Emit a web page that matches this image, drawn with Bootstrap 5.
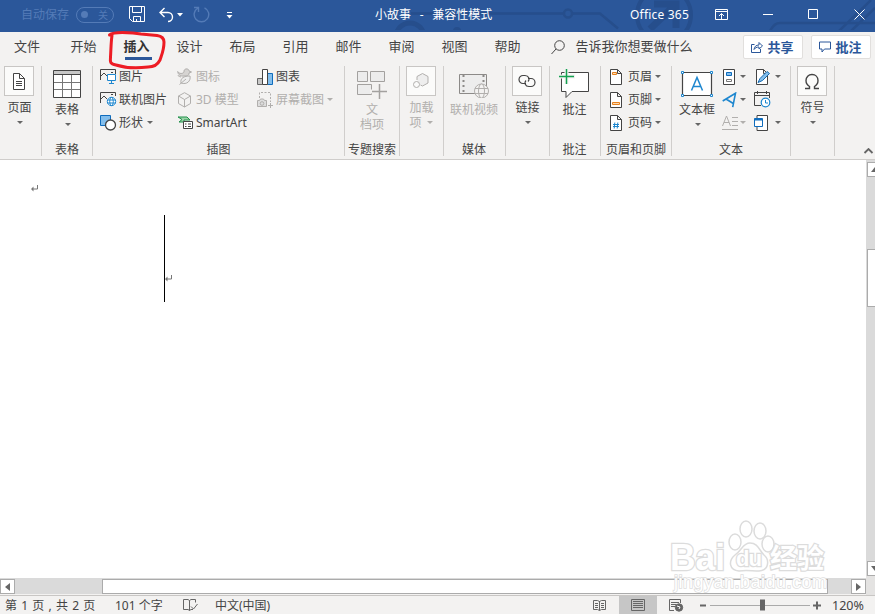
<!DOCTYPE html>
<html lang="zh-CN">
<head>
<meta charset="utf-8">
<meta name="viewport" content="width=device-width, initial-scale=1">
<title>小故事 - 兼容性模式</title>
<link href="https://cdn.jsdelivr.net/npm/bootstrap@5.3.0/dist/css/bootstrap.min.css" rel="stylesheet">
<style>
body{margin:0;overflow:hidden;font-family:"Noto Sans","Noto Sans CJK SC",sans-serif;font-size:12px;line-height:14px;color:#444}
svg{display:block;flex:none;fill:none;stroke:#444}
.app-window{width:875px;height:614px}
.title-strip{height:32px;background:#2b579a;color:#fff;padding-left:21px;display:grid;grid-template-columns:55px 53px 30px 18px 16px 33px 149px 255px 85px 47px 46px 46px 1fr;align-items:center;padding-bottom:3px}
.title-strip svg{stroke:#fff}
.title-strip>*{z-index:1;white-space:nowrap}
.title-strip .title-art{z-index:0;left:0;top:0;stroke:#264e8c}
.doc-name{word-spacing:1.2px}
.suite-name{letter-spacing:.2px}
.faded{color:#547bb7}
.title-strip svg.faded{stroke:#547bb7}
.auto-switch{width:38px;height:16px;border:1px solid #547bb7;border-radius:8px;font-size:10px;padding:0 5px 0 4px}
.auto-switch i{width:7px;height:7px;border-radius:50%;background:#547bb7}
.tab-strip{height:32px;background:#f3f2f1;padding:0 0 5px 14px;font-size:13px;display:grid;grid-template-columns:56.5px repeat(8,53px) 56px 25px 167px 68px 1fr;align-items:center;white-space:nowrap}
.tab-on{font-weight:600;color:#333}
.tab-on::after{content:"";position:absolute;left:1px;top:18px;width:27px;height:3px;background:#2b579a}
.act{width:60px;height:24px;background:#fff;border:1px solid #e1dfdd;border-radius:2px;color:#2b579a;font-weight:600;padding:0;margin-top:3px}
.act svg{stroke:#2b579a}
.red-ring{left:100px;top:25px;z-index:5}
.ribbon{height:96px;background:#f3f2f1;border-bottom:1px solid #cfcdcb;padding-top:2px}
.grp{height:90px;border-right:1px solid #d0cecc;flex:none}
.cap{height:12px;line-height:12px;white-space:nowrap}
.tall{padding-top:4px;line-height:14px;text-align:center;white-space:nowrap}
.slim{padding-right:2px}
.slim .lab,.slim .caret{position:relative;left:1px}
.boxed{width:30px;height:30px;background:#fbfbfa;border:1px solid #c8c6c4}
.lab{margin-top:5px}
.tall .caret,.slim .lab+.caret{margin-top:6px}
.tall .caret{margin-left:2px}
.caret{width:0;height:0;border:3px solid transparent;border-top:3.5px solid #666;border-bottom:0;flex:none}
.off{color:#b1afad}
.off .caret{border-top-color:#b1afad}
.off svg{stroke:#b1afad}
.line{height:21px;white-space:nowrap}
.ico{width:19px;flex:none}
.wa{width:77px}.wb{width:80px}
.work{height:435px}
.page-area{width:866px;background:#fff}
.vbar{width:9px;background:#dadada;overflow:hidden}
.knob{background:#fff;border:1px solid #ababab;flex:none}
.hbar{height:17px;background:#dadada;border-bottom:1px solid #f3f2f1;padding-top:1px}
.status{height:19px;background:#f3f2f1;border-top:1px solid #c8c6c4;display:grid;grid-template-columns:110px 68px 32px 378px 26px 54px 27px 132px 1fr;padding-left:5px;align-items:center;white-space:nowrap}
.status svg{stroke:#666}
.status>span{padding-top:2px}
.page-count{word-spacing:1.1px}
.zoom-value{font-size:12.5px}
.view-on{background:#c6c6c6;width:38px;height:18px}
.stamp{left:665px;top:512px;z-index:4}
</style>
</head>
<body>
<div class="app-window d-flex flex-column position-relative overflow-hidden">
  <header class="title-strip position-relative">
    <svg class="title-art position-absolute" width="875" height="30" stroke-width="2.5"><path d="M411 13.500H563M573 13.500H592h8l18 15"/><circle cx="568" cy="13.500" r="4"/><circle cx="410" cy="37" r="14" stroke-width="5"/><circle cx="457" cy="31" r="4" fill="#264e8c" stroke="none"/><circle cx="664" cy="15" r="27" stroke-width="4"/><path d="M650 29l27-26M654 4h22v24" stroke-width="7"/><path d="M770 31q4-8 10-8h95M838 32L871 0M850 32l25-24"/></svg>
    <span class="faded">自动保存</span>
    <span class="auto-switch faded d-flex align-items-center justify-content-between"><i></i>关</span>
    <svg width="17" height="17"><path d="M.5.5h15v15H3.500L.5 12.500zM3.500.5v6h9v-6M4.500 15.500v-5h7v5M7.500 13v2.500"/></svg>
    <svg width="16" height="16" stroke-width="1.400"><path d="M5.500 1L1 5.500l4.500 4.500M1.500 5.500H9a4.500 4.500 0 0 1 0 9"/></svg>
    <svg width="6" height="4"><path d="M0 0h6L3 3.500z" fill="#fff" stroke="none"/></svg>
    <svg class="faded" width="17" height="17" stroke-width="1.400"><path d="M1 1.500h4.500V6M5 2A7.300 7.300 0 1 0 11.500 1.800"/></svg>
    <svg width="8" height="8"><path d="M1 1.500h5"/><path d="M.5 4h6L3.500 7.500z" fill="#fff" stroke="none"/></svg>
    <span class="doc-name">小故事&nbsp; - &nbsp;兼容性模式</span>
    <span class="suite-name">Office 365</span>
    <svg width="13" height="11"><path d="M.5.5h12v10H.5zM.5 2.500h12M6.500 10V4.500M4 7l2.500-2.500L9 7"/></svg>
    <svg width="12" height="2"><path d="M1 .5h10"/></svg>
    <svg width="11" height="11"><path d="M.5.5h9v9h-9z"/></svg>
    <svg width="11" height="11"><path d="M.5.5l10 10M10.500.5l-10 10"/></svg>
  </header>

  <nav class="tab-strip">
    <span>文件</span><span>开始</span><span class="tab-on position-relative">插入</span><span>设计</span><span>布局</span><span>引用</span><span>邮件</span><span>审阅</span><span>视图</span><span>帮助</span>
    <svg class="mt-1" width="14" height="15"><circle cx="8.500" cy="5.500" r="4.800"/><path d="M5 9L.5 14"/></svg>
    <span>告诉我你想要做什么</span>
    <button class="act d-flex align-items-center justify-content-center gap-1"><svg width="12" height="12"><path d="M3.500 3.500h-3v8h9V8M3 8.500c.5-3 2-4.500 5-4.500V1.500L11.500 5 8 8V6C5.500 6 4 7 3 8.500z"/></svg><span>共享</span></button>
    <button class="act d-flex align-items-center justify-content-center gap-1"><svg width="12" height="12"><path d="M.5 1h11v7H5.500L3 11V8H.5z"/></svg><span>批注</span></button>
  </nav>
  <svg class="red-ring position-absolute" width="72" height="50"><path d="M9.500 10C13 7 21 7 33 8l8 1 16 1.500q7 1 7 6.500c0 8-2 12-4 18-2 4-5 7-12 7-12 1.500-24 .5-32-2-6-1-6-3-5.500-8C11 24 11 17 12 10.500" stroke="#ed1c24" stroke-width="3" stroke-linecap="round" stroke-linejoin="round"/></svg>

  <section class="ribbon d-flex">
    <div class="grp slim d-flex flex-column align-items-center" style="width:42px;padding-right:4px">
      <div class="boxed d-flex align-items-center justify-content-center"><svg width="14" height="17"><path d="M1.500.5h6l5 5v11h-11zM7.500.5v5h5M4 8.500h6M4 10.500h6M4 12.500h6" fill="#fff"/></svg></div>
      <div class="lab">页面</div><i class="caret"></i>
    </div>
    <div class="grp d-flex flex-column align-items-center justify-content-between" style="width:51px">
      <div class="tall d-flex flex-column align-items-center"><svg width="28" height="28"><path d="M.5.5h27v27H.5z" fill="#fff"/><path d="M1 1h26v3H1z" fill="#c8c8c8" stroke="none"/><path d="M.5 4.500h27"/><path d="M1 12.500h26M1 19.500h26M9.500 5v22M18.500 5v22" stroke="#777"/></svg><div class="lab">表格</div><i class="caret"></i></div>
      <div class="cap">表格</div>
    </div>
    <div class="grp d-flex flex-column justify-content-between" style="width:252px">
      <div class="d-flex" style="padding-left:7px">
        <div class="wa d-flex flex-column" style="row-gap:2px">
          <div class="line d-flex align-items-center"><span class="ico"><svg width="17" height="15"><path d="M.5 11V.5h15V5M0 8l4-4 4 4M11 3.500h2"/><path d="M7.500 5.500h8v6h-8zM11.500 12v2M9 14.500h5" fill="#fff" stroke="#1e87cf"/></svg></span>图片</div>
          <div class="line d-flex align-items-center"><span class="ico"><svg width="17" height="15"><path d="M.5 11V.5h15V4M0 8l4-4 3 3M11 2.500h2"/><g stroke="#1e87cf"><circle cx="11.500" cy="9.500" r="4.200" fill="#fff"/><ellipse cx="11.500" cy="9.500" rx="1.800" ry="4"/><path d="M7.500 8h8M7.500 11h8"/></g></svg></span>联机图片</div>
          <div class="line d-flex align-items-center"><span class="ico"><svg width="17" height="16"><path d="M.5.5h10v10H.5z" fill="#83beec" stroke="#0f6cbd"/><circle cx="10.500" cy="10" r="5" fill="#fff" stroke-width="1.300"/></svg></span>形状<i class="caret ms-1"></i></div>
        </div>
        <div class="wb d-flex flex-column" style="row-gap:2px">
          <div class="line d-flex align-items-center off"><span class="ico"><svg width="16" height="17"><path d="M.7 3.500C2 6 6 6 7 4c-.5-4 5-4 5-1l2.500 1L12 5c0 3-2 3-5 3-3 .5-6-1-6.300-4.500zM4 9C2 8.500 1 8 1 7" fill="#d6d4d2"/><path d="M4 15c-1-5 3-7 9-7 1 5-3 9-9 7zM2.500 16.500L9 11" fill="#eee"/></svg></span>图标</div>
          <div class="line d-flex align-items-center off"><span class="ico"><svg width="15" height="16"><path d="M7.500.7l6 3.300v7.500l-6 3.500-6-3.500V4zM1.500 4l6 3.500 6-3.500M7.500 7.500V15"/></svg></span>3D 模型</div>
          <div class="line d-flex align-items-center"><span class="ico"><svg width="17" height="14"><path d="M1 1h9l3 3H7v2H2l3-2.500z" fill="#9bd3a8" stroke="#21914a"/><path d="M6.500 5.500h9v7h-9z" fill="#fff"/><path d="M8 8h1.500M11 8h3M8 10.500h1.500M11 10.500h3"/></svg></span>SmartArt</div>
        </div>
        <div class="d-flex flex-column" style="row-gap:2px">
          <div class="line d-flex align-items-center"><span class="ico"><svg width="17" height="16"><path d="M.5 9.500h5v6h-5z" fill="#c8c8c8" stroke="#666"/><path d="M10.500 4.500h5v11h-5z" fill="#83beec" stroke="#0f6cbd"/><path d="M5.500.5h5v15h-5z" fill="#fff"/></svg></span>图表</div>
          <div class="line d-flex align-items-center off"><span class="ico"><svg width="17" height="17"><path d="M2.500 7V1.500h11V11" stroke-dasharray="2 1.500"/><path d="M.5 9.500h2l1-1.500h3l1 1.500h2v6h-9zM13.500 12v5M11 14.500h5" fill="#ddd"/><circle cx="5" cy="12.500" r="1.800"/></svg></span>屏幕截图<i class="caret" style="margin-left:3px"></i></div>
        </div>
      </div>
      <div class="cap text-center">插图</div>
    </div>
    <div class="grp d-flex flex-column align-items-center justify-content-between" style="width:55px">
      <div class="tall off d-flex flex-column align-items-center"><svg width="30" height="29"><path d="M.5 1.500h10v10H.5zM13.500 1.500h14v10h-14zM.5 14.500h14v10H.5z" fill="#ececec" stroke="#a3a19f"/><path d="M22.500 13v16M13 21.500h17" stroke="#f3f2f1" stroke-width="4"/><path d="M22.500 14v15M15 21.500h15" stroke="#a3a19f" stroke-width="1.500"/></svg><div style="margin-top:3px;line-height:15px">文<br>档项</div></div>
      <div class="cap">专题搜索</div>
    </div>
    <div class="grp slim off d-flex flex-column align-items-center" style="width:44px">
      <div class="boxed d-flex align-items-center justify-content-center"><svg width="18" height="18"><path d="M5 8V4.500L10.500 1.500 16 4.500v6.500l-5.500 3-2-1" fill="#eee"/><circle cx="4.500" cy="12.500" r="3"/></svg></div>
      <div class="lab">加载<div class="d-flex align-items-center" style="line-height:15px">项<i class="caret ms-1"></i></div></div>
    </div>
    <div class="grp d-flex flex-column align-items-center justify-content-between" style="width:62px;padding-right:1px">
      <div class="tall off d-flex flex-column align-items-center"><svg width="30" height="28"><path d="M.5 4.500h27v19H.5z" fill="#ededed" stroke="#8c8a88"/><path d="M4.500 5v18M24.500 5v10" stroke="#8c8a88" stroke-width="2" stroke-dasharray="2 3"/><g fill="#f3f2f1"><circle cx="22.500" cy="21" r="7"/><ellipse cx="22.500" cy="21" rx="3" ry="7"/><path d="M16 18.500h13M16 23.500h13"/></g></svg><div class="lab">联机视频</div></div>
      <div class="cap">媒体</div>
    </div>
    <div class="grp slim d-flex flex-column align-items-center" style="width:44px">
      <div class="boxed d-flex align-items-center justify-content-center"><svg width="18" height="14" stroke-width="1.200"><path d="M8 9.500H5a4 4 0 0 1 0-8h2c4 0 5 4 3 6M10 4.500h3a4 4 0 0 1 0 8h-2c-4 0-5-4-3-6"/></svg></div>
      <div class="lab">链接</div><i class="caret"></i>
    </div>
    <div class="grp d-flex flex-column align-items-center justify-content-between" style="width:51px;padding-right:1px">
      <div class="tall d-flex flex-column align-items-center" style="padding-top:1px"><svg width="31" height="31"><path d="M2.500 5.500h27v19H13l-6 6v-6H2.500z" fill="#fff"/><path d="M7.500 0v17M0 9.500h16" stroke="#f3f2f1" stroke-width="4"/><path d="M7.500 2v15M0 9.500h15" stroke="#13a150" stroke-width="1.500"/></svg><div class="lab">批注</div></div>
      <div class="cap">批注</div>
    </div>
    <div class="grp d-flex flex-column justify-content-between" style="width:71px">
      <div class="d-flex flex-column" style="row-gap:2px;padding-left:9px">
        <div class="line d-flex align-items-center"><span class="ico" style="width:18px"><svg width="13" height="16"><path d="M.5.5h7l4 4v11H.5zM7.500.5v4h4" fill="#fff"/><path d="M2.500 3.500h4v2h-4z" fill="#fbd9b1" stroke="#e8821e"/></svg></span>页眉<i class="caret" style="margin-left:3px"></i></div>
        <div class="line d-flex align-items-center"><span class="ico" style="width:18px"><svg width="13" height="16"><path d="M.5.5h7l4 4v11H.5zM7.500.5v4h4" fill="#fff"/><path d="M2.500 10.500h7v2h-7z" fill="#fbd9b1" stroke="#e8821e"/></svg></span>页脚<i class="caret" style="margin-left:3px"></i></div>
        <div class="line d-flex align-items-center"><span class="ico" style="width:18px"><svg width="13" height="16"><path d="M.5.5h7l4 4v11H.5zM7.500.5v4h4" fill="#fff"/><path d="M4.800 7.500l-.6 6M7.800 7.500l-.6 6M3 9.500h6M3 11.500h6" stroke="#1e87cf"/></svg></span>页码<i class="caret" style="margin-left:3px"></i></div>
      </div>
      <div class="cap text-center">页眉和页脚</div>
    </div>
    <div class="grp d-flex flex-column justify-content-between" style="width:119px">
      <div class="d-flex">
        <div class="tall d-flex flex-column align-items-center" style="width:50px"><svg width="32" height="28"><path d="M1.500 2.500h29v23h-29z" fill="#fff" stroke-width="1.200"/><path d="M.5 1.500h2v2h-2zM29.500 1.500h2v2h-2zM.5 24.500h2v2h-2zM29.500 24.500h2v2h-2z" fill="#fff" stroke="#1e87cf"/><path d="M10.500 20.500L16 7.500l5.500 13M12.300 16.500h7.400" stroke="#1e87cf" stroke-width="1.500"/></svg><div class="lab">文本框</div><i class="caret"></i></div>
        <div class="d-flex flex-column" style="width:32px;row-gap:2px">
          <div class="line d-flex align-items-center"><span class="ico" style="width:18px"><svg width="16" height="16"><path d="M1.500.5h11v15h-11z" fill="#fff"/><path d="M4.500 3.500h5v3h-5z" fill="#83beec" stroke="#0f6cbd"/><path d="M4.500 10.500h5v2h-5z" stroke="#777"/></svg></span><i class="caret"></i></div>
          <div class="line d-flex align-items-center"><span class="ico" style="width:18px"><svg width="16" height="16"><path d="M.7 9L13.500 1.200l-2.800 14M4 7l7.300 4.500" stroke="#1e87cf" stroke-width="1.600"/></svg></span><i class="caret"></i></div>
          <div class="line d-flex align-items-center off"><span class="ico" style="width:18px"><svg width="16" height="16"><path d="M.5 11L4.500 1l4 10M2 7.500h5M10 2.500h6M10 6.500h6M10 10.500h6M0 14.500h16"/></svg></span><i class="caret"></i></div>
        </div>
        <div class="d-flex flex-column" style="row-gap:2px">
          <div class="line d-flex align-items-center"><span class="ico"><svg width="17" height="16"><path d="M2.500.5h7l4 4v11h-11zM9.500.5v4h4" fill="#fff"/><path d="M4 13.500l2-4 7-7 2.500 2-7 7z" fill="#83beec" stroke="#1469b0"/></svg></span><i class="caret" style="margin-left:2px"></i></div>
          <div class="line d-flex align-items-center"><span class="ico"><svg width="17" height="17"><path d="M7 14.500H.5v-13h15V7M.5 4.500h15M3.500 0v3M12.500 0v3" /><circle cx="11.500" cy="11.500" r="4.300" fill="#fff" stroke="#1e87cf" stroke-width="1.200"/><path d="M11.500 9v3h2.500" stroke="#1e87cf"/></svg></span></div>
          <div class="line d-flex align-items-center"><span class="ico"><svg width="17" height="16"><path d="M3 .5h10.500v15H3v-15" fill="#fff"/><path d="M.5 3.500h8v8h-8z" fill="#fff" stroke="#0f6cbd"/><path d="M.5 4.500h8" stroke="#0f6cbd" stroke-width="2"/></svg></span><i class="caret" style="margin-left:2px"></i></div>
        </div>
      </div>
      <div class="cap text-center">文本</div>
    </div>
    <div class="grp slim d-flex flex-column align-items-center" style="width:44px">
      <div class="boxed d-flex align-items-center justify-content-center"><svg width="16" height="17" stroke-width="1.400"><path d="M1 15.500h4.500v-2C3 12 2 10 2 7.500 2 4 4.500 1.500 8 1.500s6 2.500 6 6c0 2.500-1 4.500-3.500 6v2H15"/></svg></div>
      <div class="lab">符号</div><i class="caret"></i>
    </div>
    <div class="ms-auto d-flex align-items-end"><svg width="11" height="6" style="margin:0 1px 5px 0"><path d="M1.500 5l4-4 4 4" stroke="#666" stroke-width="1.800"/></svg></div>
  </section>

  <main class="work d-flex">
    <div class="page-area d-flex flex-column justify-content-between">
      <svg width="866" height="418"><path d="M164.500 55v87" stroke="#000"/><g stroke="#777"><path d="M37.500 25v4H32M171.500 115v4H166"/><path d="M33.500 26.500v5L31 29zM167.500 116.500v5L165 119z" fill="#777" stroke="none"/></g></svg>
      <div class="hbar d-flex">
        <div class="knob d-flex align-items-center justify-content-center" style="width:15px"><svg width="5" height="8"><path d="M5 0v8L0 4z" fill="#666" stroke="none"/></svg></div>
        <div class="knob" style="width:726px;margin-left:87px"></div>
        <div class="knob ms-auto d-flex align-items-center justify-content-center" style="width:15px"><svg width="5" height="8"><path d="M0 0v8l5-4z" fill="#666" stroke="none"/></svg></div>
      </div>
    </div>
    <div class="vbar d-flex flex-column">
      <div class="knob d-flex align-items-center" style="width:15px;height:15px;margin:2px 0 0 1px;padding-left:3px"><svg width="8" height="5"><path d="M0 5h8L4 0z" fill="#666" stroke="none"/></svg></div>
      <div class="knob" style="width:15px;height:58px;margin:72px 0 0 1px"></div>
      <div class="knob d-flex align-items-center" style="width:15px;height:15px;margin:254px 0 0 1px;padding-left:3px"><svg width="8" height="5"><path d="M0 0h8L4 5z" fill="#666" stroke="none"/></svg></div>
      <div class="flex-grow-1" style="background:#e4e3e2"></div>
    </div>
  </main>

  <footer class="status">
    <span class="page-count">第 1 页 , 共 2 页</span>
    <span>101 个字</span>
    <svg width="15" height="14"><path d="M6.500 2.500L5 1.500H.5v10H5l1.500 1 1.500-1h2M6.500 2.500v10M6.500 2.500L8 1.500h4.500v3M8 8.500l2.500 2.500 4-5"/></svg>
    <span>中文(中国)</span>
    <svg width="14" height="12"><path d="M6.500 2v9.500M.5 1.500h4l2 1 2-1h4v9h-4l-2 1-2-1h-4zM2 4.500h3M2 6.500h3M2 8.500h3M8 4.500h3M8 6.500h3M8 8.500h3"/></svg>
    <div class="view-on d-flex align-items-center justify-content-center"><svg width="14" height="12"><path d="M.5.5h13v11H.5zM2 2.500h10M2 4.500h10M2 6.500h10M2 8.500h10"/></svg></div>
    <svg width="15" height="13" style="margin-left:-4px"><path d="M5 11.500H.5V.5h11V4M2 3.500h8M2 5.500h5M2 7.500h4"/><circle cx="10" cy="8.500" r="3.700" fill="#666"/><path d="M8 7l3 1-1 2" stroke="#fff"/></svg>
    <svg width="122" height="14" viewBox="-1 0 122 14"><path d="M-1 7.500h6" stroke-width="2"/><path d="M9 7.500h100" stroke="#aaa"/><path d="M59 1.500h5v11h-5z" fill="#666" stroke="none"/><path d="M112 7.500h8M116 3.500v8" stroke-width="2"/></svg>
    <span class="zoom-value">120%</span>
  </footer>

  <svg class="stamp position-absolute" width="170" height="84">
    <g fill="#fff" stroke="#dcdcdc" stroke-width="1.500">
      <ellipse cx="70" cy="30" rx="6" ry="8"/><ellipse cx="81" cy="17" rx="6" ry="8"/><ellipse cx="95" cy="19" rx="6" ry="8"/><ellipse cx="103" cy="32" rx="6" ry="8"/>
      <path d="M85 31c8 0 9 7 14 12 5 4 6 15-5 16-7 0-13-1-20 0-10-1-11-10-4-16 7-5 8-12 15-12z"/>
      <g font-family="Liberation Sans" font-weight="bold" paint-order="stroke" stroke-width="2.500"><text x="5" y="58" font-size="36" textLength="55" lengthAdjust="spacingAndGlyphs">Bai</text><text x="71" y="54" font-size="22" textLength="26">du</text><text x="105" y="56" font-family="Noto Sans CJK SC" font-size="27" textLength="54">经验</text></g>
      <text x="9" y="76" font-family="Liberation Sans" font-size="18" paint-order="stroke" stroke="#dedede" stroke-width="1.600" textLength="153">jingyan.baidu.com</text>
    </g>
  </svg>
</div>
<script src="https://cdn.jsdelivr.net/npm/bootstrap@5.3.0/dist/js/bootstrap.bundle.min.js"></script>
</body>
</html>
